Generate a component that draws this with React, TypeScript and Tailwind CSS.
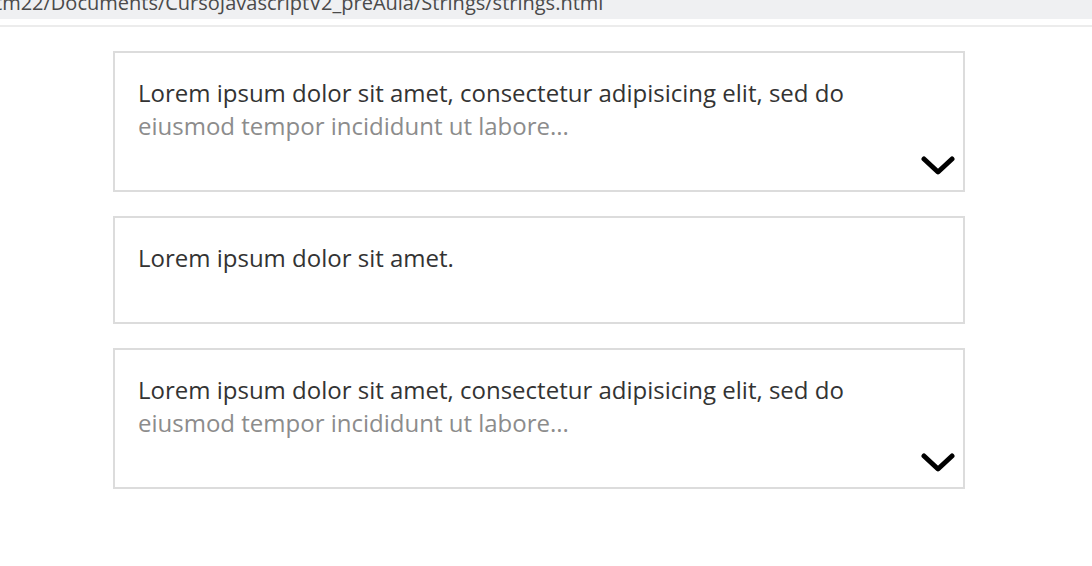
import React from "react";

const Chevron = () => (
  <svg width="34" height="22" viewBox="0 0 34 22" className="block">
    <path d="M3 4 L17 17 L31 4" fill="none" stroke="#000" strokeWidth="5" strokeLinecap="round" strokeLinejoin="round" />
  </svg>
);

function Card({ lines, expandable }: { lines: string[]; expandable?: boolean }) {
  return (
    <div className="border-2 border-[#dcdcdc] bg-white">
      <div className="pl-[23px] pr-[8px] pt-[23px] text-[24px] leading-[33px]">
        <div className="text-[#333]">{lines[0]}</div>
        {lines[1] && <div className="text-[#8c8c8c]">{lines[1]}</div>}
      </div>
      {expandable ? (
        <div className="flex justify-end pr-[8px] pt-[13px] pb-[13px]">
          <Chevron />
        </div>
      ) : (
        <div className="h-[48px]" />
      )}
    </div>
  );
}

export default function App() {
  return (
    <div className="w-[1092px] h-[566px] bg-white overflow-hidden" style={{ fontFamily: '"Open Sans", sans-serif' }}>
      <div className="h-[19px] bg-[#eff0f2] overflow-hidden">
        <div className="mt-[-11px] ml-[-5px] text-[20px] leading-[27px] text-[#4a4a4a] whitespace-nowrap">
          tm22/Documents/CursoJavascriptV2_preAula/Strings/strings.html
        </div>
      </div>
      <div className="h-[6px] bg-white" />
      <div className="h-[2px] bg-[#ececec]" />
      <div className="pl-[113px] pt-[24px]">
        <div className="w-[852px] flex flex-col gap-[24px]">
          <Card
            expandable
            lines={[
              "Lorem ipsum dolor sit amet, consectetur adipisicing elit, sed do",
              "eiusmod tempor incididunt ut labore...",
            ]}
          />
          <Card lines={["Lorem ipsum dolor sit amet."]} />
          <Card
            expandable
            lines={[
              "Lorem ipsum dolor sit amet, consectetur adipisicing elit, sed do",
              "eiusmod tempor incididunt ut labore...",
            ]}
          />
        </div>
      </div>
    </div>
  );
}
